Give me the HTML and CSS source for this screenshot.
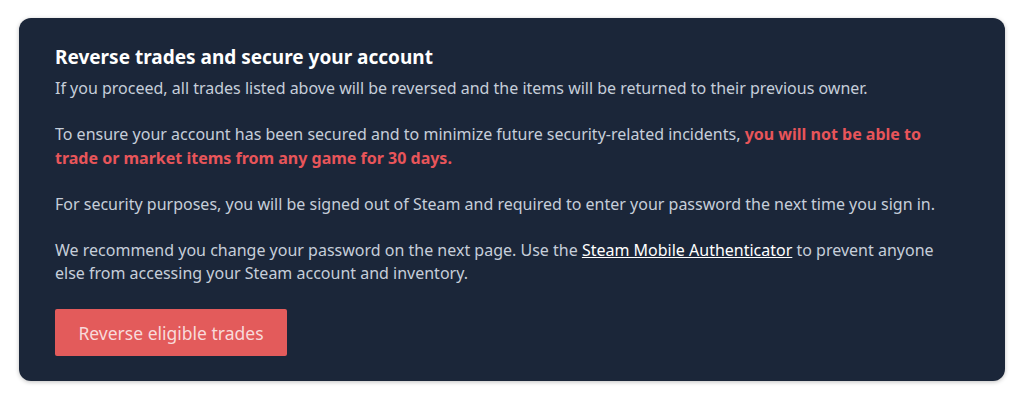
FILE: index.html
```html
<!DOCTYPE html>
<html lang="en">
<head>
    <meta charset="UTF-8">
    <meta name="viewport" content="width=device-width, initial-scale=1.0">
    <title>Reverse trades</title>
    <link rel="stylesheet" href="styles.css">
</head>
<body>

    <div class="panel">
        <h2 class="panel-title">Reverse trades and secure your account</h2>
        <p>If you proceed, all trades listed above will be reversed and the items will be returned to their previous owner.</p>
        <p>To ensure your account has been secured and to minimize future security-related incidents, <span class="warning">you will not be able to trade or market items from any game for 30 days.</span></p>
        <p>For security purposes, you will be signed out of Steam and required to enter your password the next time you sign in.</p>
        <p>We recommend you change your password on the next page. Use the <a href="#">Steam Mobile Authenticator</a> to prevent anyone else from accessing your Steam account and inventory.</p>
        <button class="button button-red">Reverse eligible trades</button>
    </div>

</body>
</html>
```

FILE: styles.css
```css
body {
    margin: 0;
    background-color: #ffffff;
    font-family: "Noto Sans", "Open Sans", sans-serif;
    padding: 18px 19px;
}

.panel {
    background: #1b2639;
    border-radius: 12px;
    box-shadow: 0 1px 4px rgba(0, 0, 0, 0.25);
    padding: 26px 55px 25px 36px;
    color: #c6ceda;
    font-size: 16px;
    line-height: 23.5px;
}

.panel-title {
    margin: 0 0 7px 0;
    font-size: 19px;
    line-height: 26px;
    font-weight: bold;
    color: #ffffff;
}

.panel p {
    margin: 0 0 22.5px 0;
}

.warning {
    color: #e8555a;
    font-weight: bold;
}

.panel a {
    color: #ffffff;
    text-decoration: underline;
}

.button {
    font-family: inherit;
    font-size: 17.5px;
    border: none;
    border-radius: 2px;
    cursor: pointer;
}

.button-red {
    background-color: #e35b5b;
    color: #f8dada;
    width: 232px;
    height: 47px;
    margin-top: 1px;
}
```
